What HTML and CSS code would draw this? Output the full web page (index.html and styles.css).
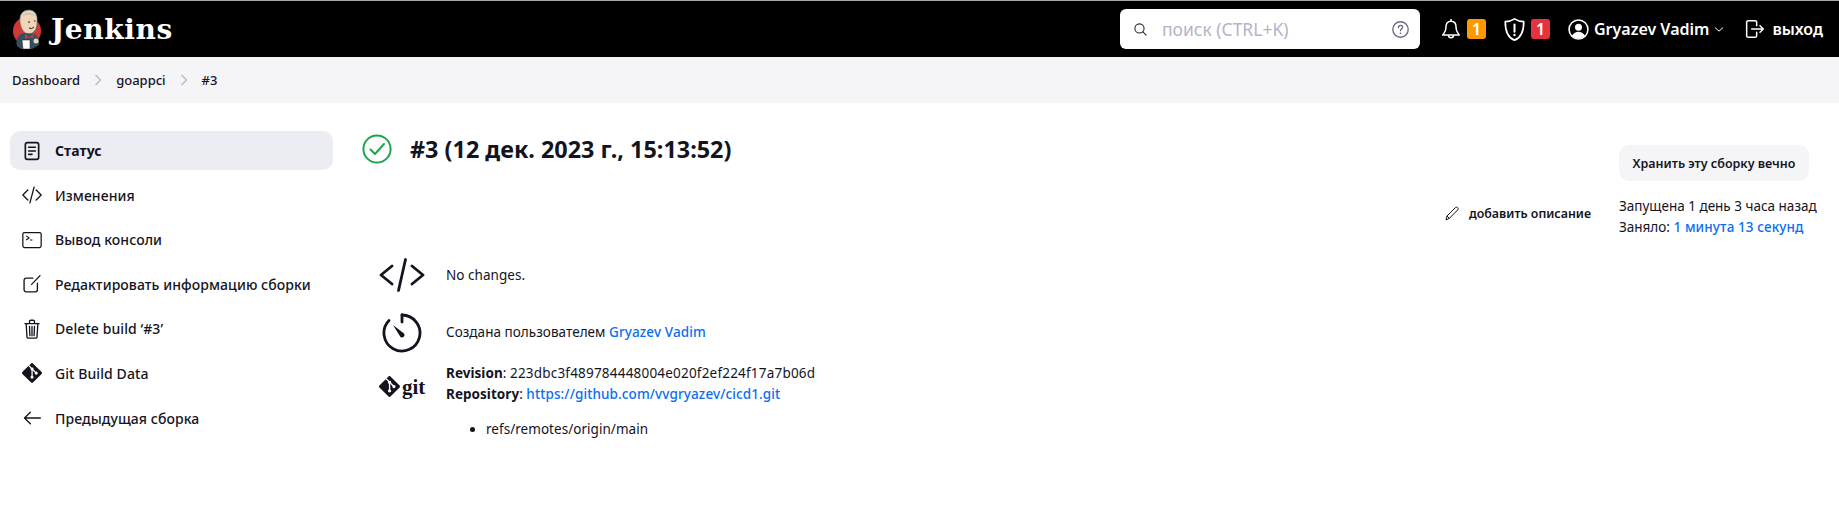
FILE: index.html
```html
<!DOCTYPE html>
<html>
<head>
<meta charset="UTF-8" />
<title>goappci #3 - Jenkins</title>
<link rel="stylesheet" href="styles.css">
</head>
<body>

<header class="topbar">
	<a class="brand">
		<svg class="brand-logo" viewBox="0 0 32 42">
			<circle cx="15" cy="23" r="14" fill="#d33833"/>
			<path d="M8 14 C7 5 12 2 17 2 C23 2 26 7 25 14 C25 20 23 25 17 26 C12 26 9 21 8 14 Z" fill="#f0d6b7" stroke="#49728b" stroke-width=".6"/>
			<path d="M9 9 C11 4 20 2 25 9 C21 6 14 6 9 9 Z" fill="#d8c6b4"/>
			<path d="M16 14 h2 M22 13 h1.5 M17 20 q3 1.5 5 -1" stroke="#231f20" stroke-width="1" fill="none"/>
			<path d="M5 38 C3 30 7 26 12 25 L22 26 C26 28 28 32 27 37 L20 41 H9 Z" fill="#335061"/>
			<path d="M13 26 L17 29 L22 26 L21 30 L17 29.500 L13 31 Z" fill="#d33833"/>
			<path d="M10 32 H18 V41 H11 Z" fill="#fff" stroke="#231f20" stroke-width=".5"/>
			<circle cx="24" cy="33" r="2.500" fill="#f0d6b7"/>
		</svg>
		<span class="brand-name">Jenkins</span>
	</a>
	<div class="search">
		<svg class="search-icon" viewBox="0 0 512 512"><path d="M221 64a157 157 0 100 314 157 157 0 000-314z" fill="none" stroke="#20202a" stroke-width="36"/><path d="M338 338l110 110" stroke="#20202a" stroke-width="36" stroke-linecap="round"/></svg>
		<span class="search-text">поиск (CTRL+K)</span>
		<svg class="search-help" viewBox="0 0 512 512"><circle cx="256" cy="256" r="208" fill="none" stroke="#6a6a80" stroke-width="36"/><path d="M200 202c2-36 26-58 58-58 31 0 54 21 54 49 0 46-56 48-56 94" fill="none" stroke="#6a6a80" stroke-width="36" stroke-linecap="round"/><circle cx="256" cy="358" r="24" fill="#6a6a80"/></svg>
	</div>
	<div class="topnav">
		<a class="topnav-item">
			<svg class="bell-icon" viewBox="0 0 24 27"><path d="M12 3.500c-4 0-6 3-6 6.500 0 6-2 8-4 10h20c-2-2-4-4-4-10 0-3.500-2-6.500-6-6.500zM12 1v2.500" fill="none" stroke="#fff" stroke-width="1.800" stroke-linejoin="round"/><path d="M9 20.500a3 3 0 006 0" fill="none" stroke="#fff" stroke-width="1.800"/></svg>
			<span class="count count-warn">1</span>
		</a>
		<a class="topnav-item">
			<svg class="shield-icon" viewBox="0 0 24 27"><path d="M12 2c3 2 6 3 10 3 0 10-2 17-10 20C4 22 2 15 2 5c4 0 7-1 10-3z" fill="none" stroke="#fff" stroke-width="1.800" stroke-linejoin="round"/><path d="M12 8v8" stroke="#fff" stroke-width="2.200" stroke-linecap="round"/><circle cx="12" cy="19.500" r="1.300" fill="#fff"/></svg>
			<span class="count count-danger">1</span>
		</a>
		<a class="topnav-item user">
			<svg class="user-icon" viewBox="0 0 24 24"><circle cx="12" cy="12" r="10.800" fill="none" stroke="#fff" stroke-width="1.800"/><circle cx="12" cy="9.500" r="4" fill="#fff"/><path d="M4.500 19c2-3 4.500-4.500 7.500-4.500s5.500 1.500 7.500 4.500c-2 2-4.500 3-7.500 3s-5.500-1-7.500-3z" fill="#fff"/></svg>
			<span>Gryazev Vadim</span>
			<svg class="chevron" viewBox="0 0 12 8"><path d="M1.500 2l4.500 4 4.500-4" fill="none" stroke="#fff" stroke-width="1.200" stroke-linecap="round"/></svg>
		</a>
		<a class="topnav-item logout">
			<svg class="logout-icon" viewBox="0 0 24 24"><path d="M14 8V4a2 2 0 00-2-2H4a2 2 0 00-2 2v16a2 2 0 002 2h8a2 2 0 002-2v-4" fill="none" stroke="#fff" stroke-width="1.800" stroke-linecap="round"/><path d="M8 12h14M18 8l4 4-4 4" fill="none" stroke="#fff" stroke-width="1.800" stroke-linecap="round" stroke-linejoin="round"/></svg>
			<span>выход</span>
		</a>
	</div>
</header>

<nav class="breadcrumbs">
	<a>Dashboard</a>
	<svg class="crumb-sep" viewBox="0 0 8 12"><path d="M1.500 1l5 5-5 5" fill="none" stroke="#b4b4c4" stroke-width="1.300"/></svg>
	<a>goappci</a>
	<svg class="crumb-sep" viewBox="0 0 8 12"><path d="M1.500 1l5 5-5 5" fill="none" stroke="#b4b4c4" stroke-width="1.300"/></svg>
	<a>#3</a>
</nav>

<div class="page">
	<aside class="side">
		<a class="task active">
			<svg class="task-icon" viewBox="0 0 24 24"><rect x="4" y="2" width="16" height="20" rx="2.500" fill="none" stroke="#14141f" stroke-width="2"/><path d="M8 7.500h8M8 12h8M8 16h4" stroke="#14141f" stroke-width="2" stroke-linecap="round"/></svg>
			<span>Статус</span>
		</a>
		<a class="task">
			<svg class="task-icon" viewBox="0 0 24 24"><path d="M7 6l-6 6 6 6M17 6l6 6-6 6M14.500 2.500l-5 19" fill="none" stroke="#14141f" stroke-width="1.600" stroke-linecap="round" stroke-linejoin="round"/></svg>
			<span>Изменения</span>
		</a>
		<a class="task">
			<svg class="task-icon" viewBox="0 0 24 24"><rect x="1" y="3" width="22" height="18" rx="2" fill="none" stroke="#14141f" stroke-width="1.500"/><path d="M5 7l3.500 2.500L5 12M9.500 12h3" fill="none" stroke="#14141f" stroke-width="1.300"/></svg>
			<span>Вывод консоли</span>
		</a>
		<a class="task">
			<svg class="task-icon" viewBox="0 0 24 24"><path d="M13 5H5a2.500 2.500 0 00-2.500 2.500V19A2.500 2.500 0 005 21.500h11a2.500 2.500 0 002.500-2.500v-8" fill="none" stroke="#14141f" stroke-width="1.600" stroke-linecap="round"/><path d="M11 13L22 1.500" stroke="#14141f" stroke-width="1.400"/></svg>
			<span>Редактировать информацию сборки</span>
		</a>
		<a class="task">
			<svg class="task-icon" viewBox="0 0 24 24"><path d="M5 6l1 15.500a1.500 1.500 0 001.500 1.500h9a1.500 1.500 0 001.500-1.500L19 6M3.500 5.500h17M9 5.500V3c0-1 .5-1.500 1.500-1.500h3C14.500 1.500 15 2 15 3v2.500M9 9l.5 11M12 9v11M15 9l-.5 11" fill="none" stroke="#14141f" stroke-width="1.600" stroke-linecap="round"/></svg>
			<span>Delete build ‘#3’</span>
		</a>
		<a class="task">
			<svg class="task-icon git-icon" viewBox="0 0 24 24"><path fill="#14141f" d="M23.546 10.93L13.067.452c-.604-.603-1.582-.603-2.188 0L8.708 2.627l2.76 2.76c.645-.215 1.379-.07 1.889.441.516.515.658 1.258.438 1.9l2.658 2.66c.645-.223 1.387-.078 1.9.435.721.72.721 1.884 0 2.604-.719.719-1.881.719-2.6 0-.539-.541-.674-1.337-.404-1.996L12.86 8.955v6.525c.176.086.342.203.488.348.713.721.713 1.883 0 2.6-.719.721-1.889.721-2.609 0-.719-.719-.719-1.879 0-2.598.182-.18.387-.316.605-.406V8.835c-.217-.091-.424-.222-.6-.401-.545-.545-.676-1.342-.396-2.009L7.636 3.7.45 10.881c-.6.605-.6 1.584 0 2.189l10.48 10.477c.604.604 1.582.604 2.186 0l10.43-10.43c.605-.603.605-1.582 0-2.187"/></svg>
			<span>Git Build Data</span>
		</a>
		<a class="task">
			<svg class="task-icon" viewBox="0 0 24 24"><path d="M22 12H3M10 5l-7 7 7 7" fill="none" stroke="#14141f" stroke-width="1.600" stroke-linecap="round" stroke-linejoin="round"/></svg>
			<span>Предыдущая сборка</span>
		</a>
	</aside>

	<main class="content">
		<div class="build-head">
			<div class="build-main">
				<h1 class="build-title">
					<svg class="status-ok" viewBox="0 0 30 30"><circle cx="15" cy="15" r="13.600" fill="none" stroke="#1ea64c" stroke-width="2"/><path d="M8.500 15.500l4.500 4.500 9-10" fill="none" stroke="#1ea64c" stroke-width="2" stroke-linecap="round" stroke-linejoin="round"/></svg>
					<span>#3 (12 дек. 2023 г., 15:13:52)</span>
				</h1>
				<a class="add-desc">
					<svg class="pencil" viewBox="0 0 24 24"><path d="M3 21l1.500-6L17 2.500c1-1 2.500-1 3.500 0s1 2.500 0 3.500L8 18.500 3 21zM4.500 15L8 18.500" fill="none" stroke="#14141f" stroke-width="1.500" stroke-linejoin="round"/></svg>
					<span>добавить описание</span>
				</a>
			</div>
			<div class="build-side">
				<button class="keep-btn">Хранить эту сборку вечно</button>
				<div class="build-info">
					<div>Запущена 1 день 3 часа назад</div>
					<div>Заняло: <a class="link">1 минута 13 секунд</a></div>
				</div>
			</div>
		</div>

		<div class="summary">
			<div class="summary-row row-changes">
				<div class="summary-icon">
					<svg class="code-big" viewBox="0 0 46 34"><path d="M13 8L2 17l11 9M33 8l11 9-11 9M26.500 1.500l-7 31" fill="none" stroke="#14141f" stroke-width="2.800" stroke-linecap="round" stroke-linejoin="round"/></svg>
				</div>
				<div class="summary-text">No changes.</div>
			</div>
			<div class="summary-row row-user">
				<div class="summary-icon">
					<svg class="timer-big" viewBox="0 0 40 40"><path d="M20 2a18 18 0 11-13 5.500" fill="none" stroke="#14141f" stroke-width="2.800" stroke-linecap="round"/><path d="M20 2v7" stroke="#14141f" stroke-width="2.800" stroke-linecap="round"/><path d="M11 12l11 8.500a2.500 2.500 0 01-3.500 3.500z" fill="#14141f"/></svg>
				</div>
				<div class="summary-text">Создана пользователем <a class="link">Gryazev Vadim</a></div>
			</div>
			<div class="summary-row row-git">
				<div class="summary-icon">
					<span class="git-logo">
						<svg class="git-diamond" viewBox="0 0 24 24"><path fill="#14141f" d="M23.546 10.93L13.067.452c-.604-.603-1.582-.603-2.188 0L8.708 2.627l2.76 2.76c.645-.215 1.379-.07 1.889.441.516.515.658 1.258.438 1.9l2.658 2.66c.645-.223 1.387-.078 1.9.435.721.72.721 1.884 0 2.604-.719.719-1.881.719-2.6 0-.539-.541-.674-1.337-.404-1.996L12.86 8.955v6.525c.176.086.342.203.488.348.713.721.713 1.883 0 2.6-.719.721-1.889.721-2.609 0-.719-.719-.719-1.879 0-2.598.182-.18.387-.316.605-.406V8.835c-.217-.091-.424-.222-.6-.401-.545-.545-.676-1.342-.396-2.009L7.636 3.7.45 10.881c-.6.605-.6 1.584 0 2.189l10.48 10.477c.604.604 1.582.604 2.186 0l10.43-10.43c.605-.603.605-1.582 0-2.187"/></svg>
						<span class="git-word">git</span>
					</span>
				</div>
				<div class="summary-text">
					<div><b>Revision</b>: <span class="hash">223dbc3f489784448004e020f2ef224f17a7b06d</span></div>
					<div><b>Repository</b>: <a class="link">https://github.com/vvgryazev/cicd1.git</a></div>
					<ul class="refs"><li>refs/remotes/origin/main</li></ul>
				</div>
			</div>
		</div>
	</main>
</div>

</body>
</html>
```
FILE: styles.css
```css
body { margin: 0; background: #fff; color: #14141f; font-family: "Noto Sans", sans-serif; font-size: 14px; line-height: 21px; }
a { color: inherit; text-decoration: none; }
svg { display: block; flex: none; }

.topbar { display: flex; align-items: center; height: 56px; background: #000; border-top: 1px solid #a6a6a6; padding: 0 16px 0 12px; }
.brand { display: flex; align-items: center; color: #fff; }
.brand-logo { width: 32px; height: 42px; }
.brand-name { font-family: "DejaVu Serif", serif; font-weight: 700; font-size: 28px; margin-left: 7px; letter-spacing: .6px; }

.search { display: flex; align-items: center; width: 300px; height: 40px; background: #fff; border-radius: 6px; margin-left: auto; padding: 0 10px 0 13px; box-sizing: border-box; }
.search-icon { width: 15px; height: 15px; }
.search-text { color: #b4b4c6; font-size: 17.500px; margin-left: 14px; flex: 1; }
.search-help { width: 19px; height: 19px; }

.topnav { display: flex; align-items: center; margin-left: 21px; color: #fff; font-weight: 600; font-size: 16px; }
.topnav-item { display: flex; align-items: center; }
.bell-icon { width: 20px; height: 25px; }
.shield-icon { width: 23px; height: 25px; }
.count { display: block; width: 19px; height: 20px; line-height: 20px; border-radius: 3px; text-align: center; color: #fff; font-size: 16px; margin-left: 6px; margin-right: 17px; }
.count-warn { background: #fe9a00; }
.count-danger { background: #e6323f; margin-left: 5px; margin-right: 18px; }
.user { gap: 5px; }
.user-icon { width: 21px; height: 21px; }
.chevron { width: 10px; height: 7px; }
.logout { margin-left: 21px; gap: 7px; }
.logout-icon { width: 20px; height: 20px; }

.breadcrumbs { display: flex; align-items: center; height: 46px; background: #f5f5f8; padding-left: 12px; font-size: 13px; font-weight: 500; gap: 14px; }
.crumb-sep { width: 8px; height: 12px; }

.page { display: flex; }
.side { width: 323px; flex: none; margin: 28px 0 0 10px; }
.task { display: flex; align-items: center; height: 39px; margin-bottom: 5.600px; padding-left: 12px; border-radius: 10px; font-weight: 500; font-size: 14px; letter-spacing: .08px; }
.task.active { background: #ecedf3; font-weight: 700; }
.task span { margin-left: 13px; }
.task-icon { width: 20px; height: 20px; }

.content { flex: 1; min-width: 0; margin-left: 29px; padding-right: 15px; }
.build-head { display: flex; }
.build-main { flex: 1; }
.build-title { display: flex; align-items: center; margin: 31px 0 0; font-size: 23.400px; line-height: 30px; font-weight: 700; }
.status-ok { width: 30px; height: 30px; margin-right: 18px; }
.add-desc { display: flex; justify-content: flex-end; align-items: center; gap: 9px; margin-top: 39px; margin-right: 28px; font-size: 12.400px; font-weight: 600; }
.pencil { width: 16px; height: 16px; }
.build-side { width: 205px; padding-top: 42px; }
.keep-btn { display: block; width: 190px; height: 36px; border: none; border-radius: 10px; background: #f5f5f8; color: #14141f; font-family: inherit; font-size: 12.500px; font-weight: 600; padding: 0; }
.build-info { margin-top: 15px; font-size: 13.500px; }
.link { color: #0b6ef0; font-weight: 500; letter-spacing: .1px; }

.summary { margin-top: 20px; margin-left: 17px; }
.summary-row { display: flex; }
.summary-icon { width: 67px; flex: none; }
.summary-text { font-size: 13.500px; letter-spacing: .04px; }
.row-changes { align-items: center; height: 34px; }
.row-user { align-items: center; height: 41px; margin-top: 20px; }
.row-git { margin-top: 10px; }
.hash { letter-spacing: .2px; }
.code-big { width: 46px; height: 34px; }
.timer-big { width: 40px; height: 40px; margin-left: 3px; }
.git-logo { display: flex; align-items: center; gap: 2px; margin-top: 13px; }
.git-diamond { width: 21px; height: 21px; }
.git-word { font-family: "Liberation Serif", serif; font-weight: 700; font-size: 21px; line-height: 20px; }
.refs { margin: 14px 0 0; padding-left: 40px; }
```
